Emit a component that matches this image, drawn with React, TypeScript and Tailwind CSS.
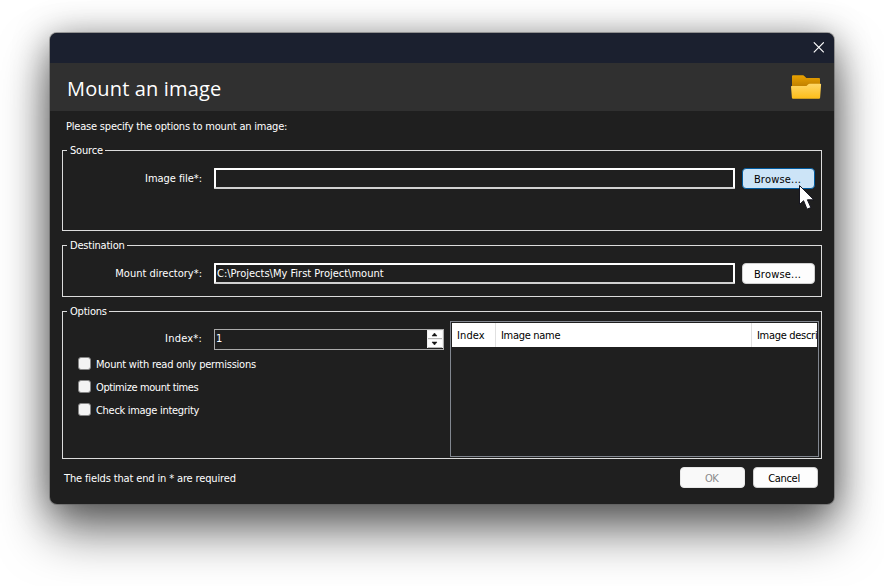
import type { ReactNode } from "react";

function Group({ title, className, children }: { title: string; className: string; children: ReactNode }) {
  return (
    <section className={`mx-3 flex flex-col border border-[#dcdcdc] ${className}`}>
      <h2 className="-mt-2 ml-1 h-[15px] w-fit shrink-0 bg-[#1f1f1f] pr-[2px] pl-[3px] leading-[15px] tracking-[-0.2px]">{title}</h2>
      {children}
    </section>
  );
}

function FieldRow({ label, className, children }: { label: string; className: string; children: ReactNode }) {
  return (
    <div className="flex h-[21px] shrink-0">
      <label className={`w-[139px] shrink-0 text-right ${className}`}>{label}</label>
      {children}
    </div>
  );
}

function TextBox({ value }: { value: string }) {
  return (
    <div className="ml-[12px] h-[21px] w-[521px] shrink-0 rounded-[1px] border-2 border-white border-b-[#d0d0d0] pl-px leading-[18px] tracking-[0px]">
      {value}
    </div>
  );
}

function Button({ children, className }: { children: ReactNode; className: string }) {
  return (
    <button className={`flex h-[21px] shrink-0 items-center justify-center rounded-[4px] border pt-[2px] leading-[19px] ${className}`}>
      {children}
    </button>
  );
}

function CheckRow({ label, className }: { label: string; className: string }) {
  return (
    <label className="flex h-[23px] items-start">
      <span className="mt-[4px] mr-[5px] size-[13px] rounded-[3px] border border-[#858585] bg-[#f3f3f3]" />
      <span className={`leading-[23px] ${className}`}>{label}</span>
    </label>
  );
}

function FolderIcon() {
  return (
    <svg width="32" height="26" viewBox="0 0 32 26">
      <defs>
        <linearGradient id="folderBack" x1="0" y1="0" x2="0" y2="1">
          <stop offset="0" stopColor="#e8a100" />
          <stop offset="0.75" stopColor="#bd7e00" />
        </linearGradient>
        <linearGradient id="folderFront" x1="0" y1="0" x2="0" y2="1">
          <stop offset="0" stopColor="#ffd766" />
          <stop offset="1" stopColor="#fdbd18" />
        </linearGradient>
      </defs>
      <path d="M2 1.2Q2 .3 3 .3H13Q13.7 .3 14.3 .9L16.3 3H29Q30 3 30 4V16H2Z" fill="url(#folderBack)" />
      <path d="M1 11.7Q.9 11 1.7 11H15.8Q16.5 11 17 10.5L18.3 9.3Q18.8 8.8 19.6 8.8H30.4Q31.2 8.8 31.1 9.6L30.1 22.7Q30 23.7 29 23.7H3Q2 23.7 1.9 22.7Z" fill="url(#folderFront)" />
    </svg>
  );
}

export default function App() {
  return (
    <div className="flex h-[586px] w-[884px] overflow-hidden bg-white pt-[33px] pl-[50px] font-['DejaVu_Sans_Condensed','DejaVu_Sans',sans-serif] text-[11px] tracking-[-0.3px] whitespace-pre text-white">
      <div className="flex h-[471px] w-[784px] flex-col overflow-hidden rounded-[7px] bg-[#1f1f1f] shadow-[0_0_0_1px_rgba(90,90,90,0.5),0_28px_50px_rgba(0,0,0,0.52),0_4px_36px_rgba(0,0,0,0.42)]">
        <div className="flex h-[30px] shrink-0 justify-end bg-[#1b202f] pt-[9px] pr-[10px]">
          <svg width="11" height="11" viewBox="0 0 11 11" stroke="#fff" strokeWidth="1.1">
            <path d="M.8.3 10.8 10.3M10.8.3.8 10.3" />
          </svg>
        </div>
        <header className="flex h-[48px] shrink-0 justify-between bg-[#303030] pr-[12px] pl-[17px]">
          <h1 className="font-['Open_Sans','Noto_Sans',sans-serif] text-[20px] leading-[52px] tracking-[0.15px]">Mount an image</h1>
          <div className="pt-[12px]"><FolderIcon /></div>
        </header>

        <p className="h-[39px] shrink-0 pt-[8px] pl-[16px] leading-[16px] tracking-[-0.2px]">Please specify the options to mount an image:</p>

        <Group title="Source" className="h-[81px] shrink-0">
          <div className="mt-[10px]">
            <FieldRow label="Image file*:" className="leading-[22px] tracking-[-0.05px]">
              <TextBox value="" />
              <Button className="ml-[7px] w-[73px] border-[#005a9e] bg-[#cce4f7] pr-[2px] tracking-[0.2px] text-black">Browse...</Button>
            </FieldRow>
          </div>
        </Group>

        <Group title="Destination" className="mt-[14px] h-[52px] shrink-0">
          <div className="mt-[10px]">
            <FieldRow label="Mount directory*:" className="leading-[22px] tracking-[0px]">
              <TextBox value="C:\Projects\My First Project\mount" />
              <Button className="ml-[7px] w-[73px] border-[#d0d0d0] bg-[#fdfdfd] pr-[2px] tracking-[0.2px] text-black">Browse...</Button>
            </FieldRow>
          </div>
        </Group>

        <Group title="Options" className="mt-[14px] h-[148px] shrink-0">
          <div className="flex">
            <div className="w-[387px] shrink-0 pt-[10px]">
              <FieldRow label="Index*:" className="leading-[20px] tracking-[0.2px]">
                <div className="ml-[12px] flex w-[230px] justify-between border border-[#ababab]">
                  <span className="pl-px leading-[18px]">1</span>
                  <div className="flex h-[18px] w-[16px] flex-col gap-px bg-[#f0f0f0] p-px">
                    {["M4 5h5L6.5 2z", "M4 2h5L6.5 5z"].map((d) => (
                      <span key={d} className="h-[8px] border-b border-[#b5b5b5] bg-[#fdfdfd]">
                        <svg width="14" height="7" viewBox="0 0 14 7" className="block" fill="#111" stroke="#111" strokeWidth=".5">
                          <path d={d} />
                        </svg>
                      </span>
                    ))}
                  </div>
                </div>
              </FieldRow>
              <div className="mt-[3px] pl-[15px]">
                <CheckRow label="Mount with read only permissions" className="tracking-[-0.22px]" />
                <CheckRow label="Optimize mount times" className="tracking-[-0.4px]" />
                <CheckRow label="Check image integrity" className="tracking-[-0.3px]" />
              </div>
            </div>
            <div className="mt-[2px] h-[136px] w-[369px] border border-[#828790] p-px">
              <div className="flex h-[24px] overflow-hidden bg-white leading-[25px] text-black">
                <span className="w-[44px] shrink-0 border-r border-[#e0e0e0] pl-[5px] tracking-[0.1px]">Index</span>
                <span className="w-[256px] shrink-0 border-r border-[#e0e0e0] pl-[5px]">Image name</span>
                <span className="w-[65px] shrink-0 overflow-hidden pl-[5px] tracking-[-0.3px]">Image descri</span>
              </div>
            </div>
          </div>
        </Group>

        <footer className="mt-[8px] flex pr-[16px] pl-[14px]">
          <span className="grow pt-px leading-[22px] tracking-[-0.14px]">The fields that end in * are required</span>
          <Button className="w-[65px] border-[#e8e8e8] bg-[#f9f9f9] pr-[2px] tracking-[-0.6px] text-[#8b8b8b]">OK</Button>
          <Button className="ml-[8px] w-[65px] border-[#d0d0d0] bg-[#fdfdfd] pr-[3px] text-black">Cancel</Button>
        </footer>
      </div>
      <svg className="absolute top-[184px] left-[798px]" width="18" height="28" viewBox="0 0 18 28">
        <path d="M1.5 1.5V20.5L5.6 16.7 9 25.2 12.9 23.6 9.4 15.8H15.9Z" fill="#fff" stroke="#15151f" strokeWidth="1" />
      </svg>
    </div>
  );
}
